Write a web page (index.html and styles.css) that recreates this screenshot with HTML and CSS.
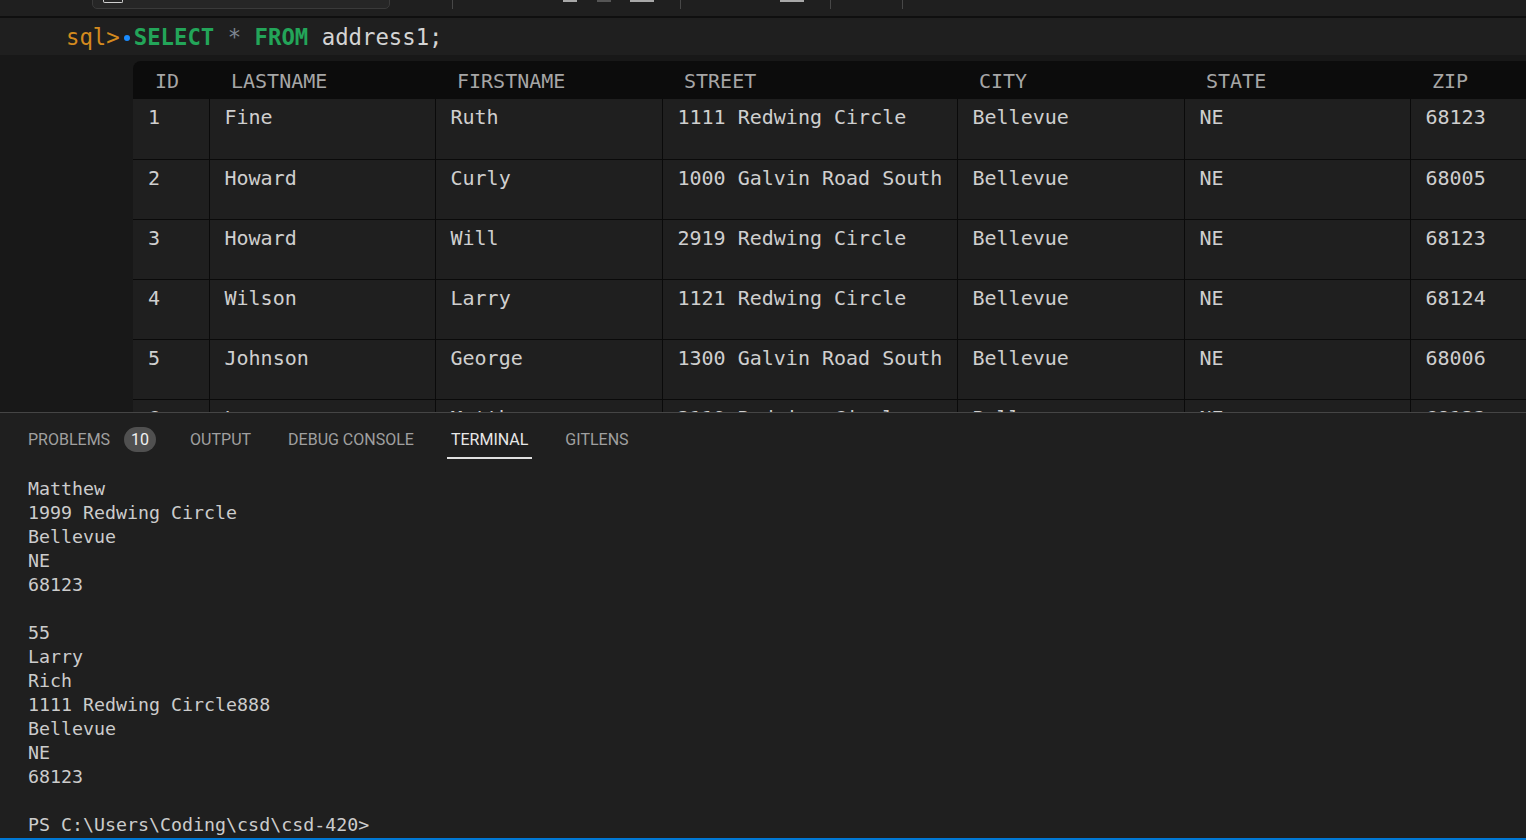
FILE: index.html
```html
<!DOCTYPE html>
<html>
<head>
<meta charset="utf-8">
<link rel="stylesheet" href="styles.css">
</head>
<body>
<div class="toolbar">
  <div class="searchbox"><span class="sb-icon"></span></div>
  <span class="sep sep1"></span>
  <span class="tb-ico i1"></span><span class="tb-ico i2"></span><span class="tb-ico i3"></span>
  <span class="sep sep2"></span>
  <span class="tb-ico i4"></span>
  <span class="sep sep3"></span>
  <span class="sep sep4"></span>
</div>
<div class="divider"></div>
<div class="cmdline"><span class="prompt">sql&gt;</span><span class="dot"></span><span class="kw">SELECT</span><span class="sp"> </span><span class="star">*</span><span class="sp"> </span><span class="kw">FROM</span><span class="sp"> </span><span class="ident">address1;</span></div>
<div class="results">
  <div class="table-wrap">
    <table class="grid">
      <colgroup>
        <col class="c-id"><col class="c-last"><col class="c-first"><col class="c-street"><col class="c-city"><col class="c-state"><col class="c-zip">
      </colgroup>
      <thead>
        <tr><th>ID</th><th>LASTNAME</th><th>FIRSTNAME</th><th>STREET</th><th>CITY</th><th>STATE</th><th>ZIP</th></tr>
      </thead>
      <tbody>
        <tr><td>1</td><td>Fine</td><td>Ruth</td><td>1111 Redwing Circle</td><td>Bellevue</td><td>NE</td><td>68123</td></tr>
        <tr><td>2</td><td>Howard</td><td>Curly</td><td>1000 Galvin Road South</td><td>Bellevue</td><td>NE</td><td>68005</td></tr>
        <tr><td>3</td><td>Howard</td><td>Will</td><td>2919 Redwing Circle</td><td>Bellevue</td><td>NE</td><td>68123</td></tr>
        <tr><td>4</td><td>Wilson</td><td>Larry</td><td>1121 Redwing Circle</td><td>Bellevue</td><td>NE</td><td>68124</td></tr>
        <tr><td>5</td><td>Johnson</td><td>George</td><td>1300 Galvin Road South</td><td>Bellevue</td><td>NE</td><td>68006</td></tr>
        <tr><td>6</td><td>Larson</td><td>Matthew</td><td>2119 Redwing Circle</td><td>Bellevue</td><td>NE</td><td>68123</td></tr>
      </tbody>
    </table>
  </div>
</div>
<div class="panel">
  <div class="tabs">
    <div class="tab">PROBLEMS</div>
    <div class="badge">10</div>
    <div class="tab">OUTPUT</div>
    <div class="tab">DEBUG CONSOLE</div>
    <div class="tab active">TERMINAL</div>
    <div class="tab">GITLENS</div>
  </div>
  <pre class="terminal">Matthew
1999 Redwing Circle
Bellevue
NE
68123

55
Larry
Rich
1111 Redwing Circle888
Bellevue
NE
68123

PS C:\Users\Coding\csd\csd-420&gt;</pre>
</div>
<div class="statusline"></div>
</body>
</html>
```
FILE: styles.css
```css
html, body {
  margin: 0;
  padding: 0;
  width: 1526px;
  height: 840px;
  overflow: hidden;
  background: #1f1f1f;
}
body {
  display: flex;
  flex-direction: column;
}
.toolbar {
  height: 16px;
  background: #1f1f1f;
  position: relative;
  flex: none;
}
.searchbox {
  position: absolute;
  left: 92px;
  top: -6px;
  width: 296px;
  height: 13px;
  border: 1px solid #3a3a3a;
  border-radius: 5px;
  background: #262626;
}
.sb-icon {
  position: absolute;
  left: 10px;
  top: 4px;
  width: 18px;
  height: 3px;
  border: 1px solid #d0d0d0;
  border-top: none;
  border-radius: 0 0 2px 2px;
}
.sep {
  position: absolute;
  top: 0;
  width: 1px;
  height: 9px;
  background: #474747;
}
.sep1 { left: 452px; }
.sep2 { left: 680px; }
.sep3 { left: 830px; }
.sep4 { left: 902px; }
.tb-ico {
  position: absolute;
  top: 0;
  height: 2px;
  background: #a8a8a8;
}
.i1 { left: 563px; width: 14px; }
.i2 { left: 597px; width: 14px; background: #555; }
.i3 { left: 630px; width: 24px; }
.i4 { left: 780px; width: 24px; }
.divider {
  height: 2px;
  background: #0f0f0f;
  flex: none;
}
.cmdline {
  height: 37px;
  flex: none;
  background: #1f1f1f;
  box-sizing: border-box;
  padding: 2px 0 0 66px;
  font-family: "DejaVu Sans Mono", monospace;
  font-size: 22.3px;
  line-height: 35px;
  color: #d4d4d4;
  white-space: nowrap;
}
.sp { white-space: pre; }
.prompt { color: #d48a1e; }
.dot {
  display: inline-block;
  width: 6px;
  height: 6px;
  border-radius: 50%;
  background: #1a8cff;
  margin: 0 4px 0 4px;
  vertical-align: middle;
  position: relative;
  top: -1px;
}
.kw { color: #23a559; font-weight: bold; }
.star { color: #7d8590; }
.ident { color: #d4d4d4; }
.results {
  height: 357px;
  flex: none;
  background: #181818;
  box-sizing: border-box;
  padding: 6px 0 0 133px;
  overflow: hidden;
}
.table-wrap {
  border-radius: 8px 0 0 0;
  overflow: hidden;
  height: 100%;
}
.grid {
  border-collapse: collapse;
  table-layout: fixed;
  width: 1393px;
  font-family: "DejaVu Sans Mono", monospace;
  font-size: 20px;
}
.c-id { width: 76px; }
.c-last { width: 226px; }
.c-first { width: 227px; }
.c-street { width: 295px; }
.c-city { width: 227px; }
.c-state { width: 226px; }
.c-zip { width: 116px; }
.grid th {
  background: #0c0c0c;
  color: #a6a6a6;
  font-weight: normal;
  text-align: left;
  height: 38px;
  padding: 2px 0 0 22px;
  box-sizing: border-box;
  vertical-align: middle;
  line-height: 22px;
  white-space: nowrap;
}
.grid td {
  background: #1f1f1f;
  color: #cfcfcf;
  height: 60px;
  box-sizing: border-box;
  padding: 6px 0 0 15px;
  vertical-align: top;
  line-height: 24px;
  border-left: 1px solid #0a0a0a;
  border-bottom: 1px solid #0a0a0a;
  white-space: nowrap;
  overflow: hidden;
}
.grid td:first-child { border-left: none; }
.panel {
  flex: 1;
  border-top: 1px solid #454545;
  background: #1f1f1f;
  display: flex;
  flex-direction: column;
}
.tabs {
  display: flex;
  align-items: flex-start;
  height: 46px;
  padding-left: 24px;
  gap: 29px;
  font-family: Roboto, "Liberation Sans", Arial, sans-serif;
  font-size: 16px;
  letter-spacing: 0;
}
.tab {
  height: 45px;
  padding: 0 4px;
  color: #a0a0a0;
  border-bottom: 1px solid transparent;
  line-height: 54px;
}
.tab.active {
  color: #e8e8e8;
  border-bottom: 2px solid #e0e0e0;
  height: 44px;
}
.badge {
  margin: 14px 1px 0 -19px;
  width: 32px;
  height: 25px;
  border-radius: 13px;
  background: #505050;
  color: #f0f0f0;
  font-size: 16px;
  text-align: center;
  line-height: 25px;
  letter-spacing: 0;
}
.terminal {
  margin: 18px 0 0 28px;
  font-family: "DejaVu Sans Mono", monospace;
  font-size: 18.3px;
  line-height: 24px;
  color: #cccccc;
}
.statusline {
  height: 2px;
  background: #0078d4;
  flex: none;
}
```
